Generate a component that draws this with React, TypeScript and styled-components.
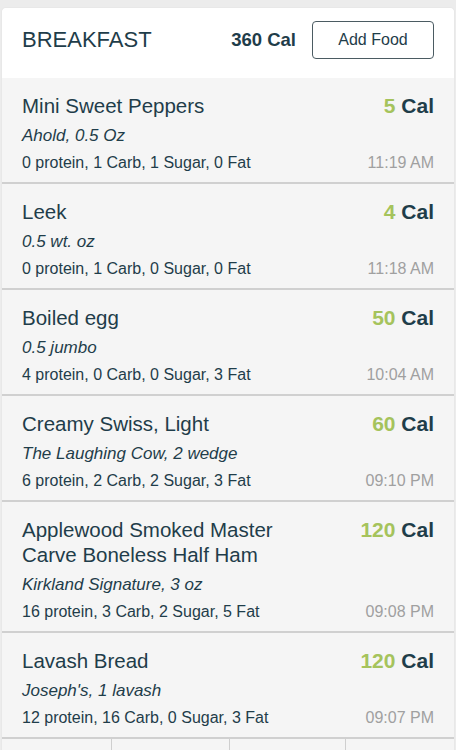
import React from 'react'
import styled, { createGlobalStyle } from 'styled-components'

const GlobalStyle = createGlobalStyle`
  html, body {
    margin: 0;
    padding: 0;
    background: #ececec;
    font-family: "Liberation Sans", Arial, sans-serif;
    color: #1f3d4a;
  }
`

const Page = styled.div`
  padding: 8px 2px 0;
  height: 742px;
  overflow: hidden;
`

const Card = styled.div`
  background: #f5f5f5;
  border-radius: 4px 4px 0 0;
  box-shadow: 0 0 1px rgba(0, 0, 0, 0.18);
  overflow: hidden;
`

const Header = styled.div`
  display: flex;
  align-items: center;
  height: 70px;
  box-sizing: border-box;
  padding: 0 20px 6px;
  background: #fff;
`

const MealTitle = styled.h1`
  flex: 1;
  margin: 0;
  font-size: 22px;
  font-weight: normal;
`

const Total = styled.span`
  font-size: 18.5px;
  font-weight: bold;
  margin-right: 16px;
`

const AddButton = styled.button`
  width: 122px;
  height: 38px;
  background: #fff;
  border: 1.5px solid #4b5b62;
  border-radius: 4px;
  font-family: inherit;
  font-size: 16px;
  color: #1f3d4a;
`

const Row = styled.div`
  padding: 15px 20px 7px;
  border-bottom: 2px solid #d0d0d0;
`

const Line = styled.div<{ $gap?: number }>`
  display: flex;
  justify-content: space-between;
  align-items: flex-start;
  margin-top: ${p => p.$gap ?? 0}px;
`

const Name = styled.div`
  font-size: 20.5px;
  line-height: 25px;
  max-width: 290px;
`

const Calories = styled.div`
  font-size: 21px;
  line-height: 25px;
  font-weight: bold;
  white-space: nowrap;
`

const Amount = styled.span`
  color: #a5c35c;
`

const Portion = styled.div`
  font-size: 17px;
  line-height: 24px;
  font-style: italic;
`

const Macros = styled.div`
  font-size: 16px;
  line-height: 24px;
`

const Time = styled.div`
  font-size: 16px;
  line-height: 24px;
  color: #a0a0a0;
`

const Footer = styled.div`
  display: flex;
  height: 40px;
  margin: 0 -2px;
  background: #f5f5f5;
`

const Tab = styled.div<{ $w: number }>`
  width: ${p => p.$w}px;
  border-right: 1.5px solid #cfcfcf;

  &:last-child {
    border-right: none;
  }
`

type Food = {
  name: string
  portion: string
  cal: number
  macros: string
  time: string
}

const foods: Food[] = [
  { name: 'Mini Sweet Peppers', portion: 'Ahold, 0.5 Oz', cal: 5, macros: '0 protein, 1 Carb, 1 Sugar, 0 Fat', time: '11:19 AM' },
  { name: 'Leek', portion: '0.5 wt. oz', cal: 4, macros: '0 protein, 1 Carb, 0 Sugar, 0 Fat', time: '11:18 AM' },
  { name: 'Boiled egg', portion: '0.5 jumbo', cal: 50, macros: '4 protein, 0 Carb, 0 Sugar, 3 Fat', time: '10:04 AM' },
  { name: 'Creamy Swiss, Light', portion: 'The Laughing Cow, 2 wedge', cal: 60, macros: '6 protein, 2 Carb, 2 Sugar, 3 Fat', time: '09:10 PM' },
  { name: 'Applewood Smoked Master Carve Boneless Half Ham', portion: 'Kirkland Signature, 3 oz', cal: 120, macros: '16 protein, 3 Carb, 2 Sugar, 5 Fat', time: '09:08 PM' },
  { name: 'Lavash Bread', portion: "Joseph's, 1 lavash", cal: 120, macros: '12 protein, 16 Carb, 0 Sugar, 3 Fat', time: '09:07 PM' },
]

const FoodRow: React.FC<Food> = ({ name, portion, cal, macros, time }) => (
  <Row>
    <Line>
      <Name>{name}</Name>
      <Calories>
        <Amount>{cal}</Amount> Cal
      </Calories>
    </Line>
    <Line $gap={6}>
      <Portion>{portion}</Portion>
    </Line>
    <Line $gap={3}>
      <Macros>{macros}</Macros>
      <Time>{time}</Time>
    </Line>
  </Row>
)

export default function App() {
  return (
    <>
      <GlobalStyle />
      <Page>
        <Card>
          <Header>
            <MealTitle>BREAKFAST</MealTitle>
            <Total>360 Cal</Total>
            <AddButton>Add Food</AddButton>
          </Header>
          {foods.map(f => (
            <FoodRow key={f.name} {...f} />
          ))}
          <Footer>
            <Tab $w={112} />
            <Tab $w={117} />
            <Tab $w={116} />
            <Tab $w={111} />
          </Footer>
        </Card>
      </Page>
    </>
  )
}
